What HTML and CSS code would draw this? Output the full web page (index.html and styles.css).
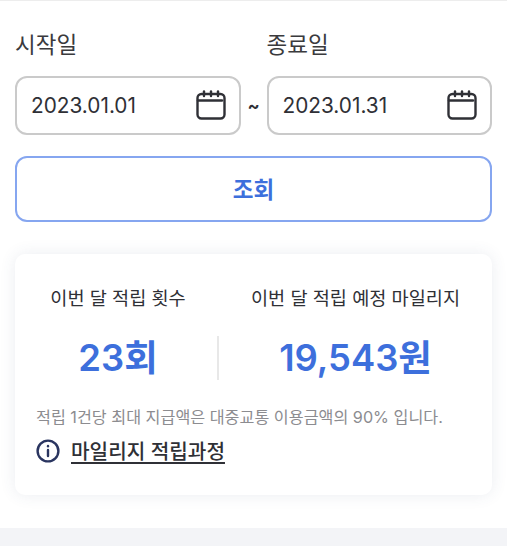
FILE: index.html
```html
<!DOCTYPE html>
<html lang="ko">
<head>
  <meta charset="UTF-8">
  <title>마일리지 적립 조회</title>
  <link rel="stylesheet" href="styles.css">
</head>
<body>
  <div class="container">
    <div class="date-row">
      <div class="date-field">
        <div class="date-label">시작일</div>
        <div class="date-input">
          <span class="date-value">2023.01.01</span>
          <svg class="calendar" viewBox="0 0 30 30" fill="none" stroke="currentColor" stroke-width="2.4" stroke-linecap="round" stroke-linejoin="round">
            <rect x="1.5" y="4" width="27" height="24.5" rx="4"/>
            <line x1="2" y1="10.5" x2="26" y2="10.5"/>
            <line x1="8" y1="1.5" x2="8" y2="6"/>
            <line x1="15" y1="1.5" x2="15" y2="6"/>
            <line x1="22" y1="1.5" x2="22" y2="6"/>
          </svg>
        </div>
      </div>
      <span class="date-sep">~</span>
      <div class="date-field">
        <div class="date-label">종료일</div>
        <div class="date-input">
          <span class="date-value">2023.01.31</span>
          <svg class="calendar" viewBox="0 0 30 30" fill="none" stroke="currentColor" stroke-width="2.4" stroke-linecap="round" stroke-linejoin="round">
            <rect x="1.5" y="4" width="27" height="24.5" rx="4"/>
            <line x1="2" y1="10.5" x2="26" y2="10.5"/>
            <line x1="8" y1="1.5" x2="8" y2="6"/>
            <line x1="15" y1="1.5" x2="15" y2="6"/>
            <line x1="22" y1="1.5" x2="22" y2="6"/>
          </svg>
        </div>
      </div>
    </div>

    <button class="search-button">조회</button>

    <div class="summary-card">
      <div class="stats">
        <div class="stat stat-count">
          <div class="stat-title">이번 달 적립 횟수</div>
          <div class="stat-value">23회</div>
        </div>
        <div class="stat-divider"></div>
        <div class="stat stat-amount">
          <div class="stat-title">이번 달 적립 예정 마일리지</div>
          <div class="stat-value">19,543원</div>
        </div>
      </div>
      <p class="note">적립 1건당 최대 지급액은 대중교통 이용금액의 90% 입니다.</p>
      <a class="info-link" href="#">
        <svg class="info-icon" viewBox="0 0 24 24" fill="none" stroke="currentColor" stroke-width="2.4" stroke-linecap="round">
          <circle cx="12" cy="12" r="10.4"/>
          <line x1="12" y1="11" x2="12" y2="17"/>
          <line x1="12" y1="7" x2="12" y2="7.3"/>
        </svg>
        <span>마일리지 적립과정</span>
      </a>
    </div>
  </div>
  <div class="bottom-band"></div>
</body>
</html>
```

FILE: styles.css
```css
:root {
  --primary-blue: #3D6FDC;
  --text-primary: #2F3036;
  --text-secondary: #8C8C90;
  --border-gray: #CACACA;
}

html, body {
  height: 100%;
}

body {
  margin: 0;
  display: flex;
  flex-direction: column;
  background: white;
  color: var(--text-primary);
  font-family: Inter, "Noto Sans CJK KR", sans-serif;
  border-top: 1px solid #EDEDED;
  box-sizing: border-box;
}

.container {
  flex: 1;
  padding: 29px 15px 0;
}

.date-row {
  display: flex;
  align-items: flex-end;
}

.date-field {
  flex: 1;
  min-width: 0;
}

.date-label {
  font-size: 22.5px;
  line-height: 30px;
  margin-bottom: 16px;
  color: #3A3A3D;
}

.date-input {
  display: flex;
  align-items: center;
  justify-content: space-between;
  height: 59px;
  box-sizing: border-box;
  padding: 0 13px 0 14px;
  border: 2px solid var(--border-gray);
  border-radius: 12px;
}

.date-value {
  font-size: 20.8px;
}

.calendar {
  width: 30px;
  height: 30px;
  margin-top: -2px;
}

.date-sep {
  width: 26px;
  height: 59px;
  line-height: 59px;
  text-align: center;
  font-size: 18px;
  font-weight: 700;
}

.search-button {
  display: block;
  width: 100%;
  height: 66px;
  margin-top: 21px;
  padding-bottom: 3px;
  background: white;
  border: 2px solid #86A6F0;
  border-radius: 12px;
  color: var(--primary-blue);
  font-family: inherit;
  font-size: 22.5px;
  font-weight: 600;
}

.summary-card {
  margin-top: 32px;
  height: 241px;
  box-sizing: border-box;
  padding: 30px 21px 0;
  border-radius: 10px;
  background: white;
  box-shadow: 0 0 16px rgba(60, 80, 120, 0.1);
}

.stats {
  display: flex;
  align-items: flex-end;
  margin: 0 -21px;
}

.stat {
  text-align: center;
}

.stat-count {
  width: 198px;
  padding-left: 4px;
}

.stat-amount {
  flex: 1;
}

.stat-title {
  font-size: 18.6px;
  line-height: 28px;
}

.stat-value {
  margin-top: 21px;
  font-size: 36.4px;
  line-height: 50px;
  font-weight: 600;
  color: var(--primary-blue);
}

.stat-divider {
  width: 2px;
  height: 44px;
  margin-bottom: 3px;
  background: #E8E8E8;
}

.note {
  margin: 23px 0 0;
  font-size: 16.2px;
  line-height: 22px;
  color: var(--text-secondary);
}

.info-link {
  display: inline-flex;
  align-items: center;
  gap: 11px;
  margin-top: 8px;
  color: var(--text-primary);
  font-size: 20.2px;
  font-weight: 500;
  text-underline-offset: 3px;
}

.info-icon {
  width: 24px;
  height: 24px;
  color: #2A3560;
}

.bottom-band {
  height: 18px;
  background: #F3F4F7;
}
```
